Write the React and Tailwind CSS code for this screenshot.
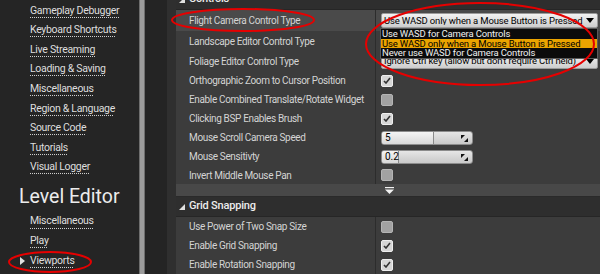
import React from 'react';

const sideTop = [
  'Gameplay Debugger',
  'Keyboard Shortcuts',
  'Live Streaming',
  'Loading & Saving',
  'Miscellaneous',
  'Region & Language',
  'Source Code',
  'Tutorials',
  'Visual Logger',
];

function SideLink({ label, arrow }) {
  return (
    <div className="h-[19.6px] flex items-center pl-[30px] relative">
      {arrow && (
        <span className="absolute left-[20px] top-[6px] w-0 h-0 border-y-[4px] border-y-transparent border-l-[5px] border-l-[#e0e0e0]" />
      )}
      <span className="text-[10.5px] tracking-[-0.3px] text-[#dedede] leading-none underline decoration-dotted decoration-[#cfcfcf] underline-offset-[3px]">
        {label}
      </span>
    </div>
  );
}

function Check({ on }) {
  return (
    <div
      className={`w-[12px] h-[12px] rounded-[2px] border flex items-center justify-center ${
        on ? 'bg-[#d6d6d6] border-[#eeeeee]' : 'bg-[#a2a2a2] border-[#b4b4b4]'
      }`}
    >
      {on && (
        <svg width="8" height="7" viewBox="0 0 8 7">
          <path d="M1 4 L3 6 L7 1" stroke="#333" strokeWidth="1.6" fill="none" />
        </svg>
      )}
    </div>
  );
}

function Combo({ text }) {
  return (
    <div className="w-[217px] h-[15px] rounded-[2px] bg-gradient-to-b from-[#f2f2f2] to-[#cdcdcd] border border-[#9a9a9a] flex items-center pl-[2px] pr-[3px] overflow-hidden">
      <span className="flex-1 text-[9.5px] tracking-[-0.15px] text-black leading-none whitespace-nowrap overflow-hidden">{text}</span>
      <span className="w-0 h-0 border-x-[4px] border-x-transparent border-t-[5px] border-t-black ml-[2px]" />
    </div>
  );
}

function Spinner() {
  return (
    <svg width="7" height="7" viewBox="0 0 7 7">
      <path d="M0 0 L4 0 L0 4 Z" fill="#111" />
      <path d="M7 7 L3 7 L7 3 Z" fill="#111" />
    </svg>
  );
}

function NumField({ value, fill }) {
  return (
    <div className="w-[92px] h-[14px] rounded-[3px] border border-[#8c8c8c] bg-gradient-to-b from-[#e6e6e6] to-[#c9c9c9] flex items-center relative overflow-hidden">
      <div className="h-full border-r border-[#8a8a8a] bg-gradient-to-b from-[#f4f4f4] to-[#d8d8d8]" style={{ width: fill }} />
      <span className="absolute left-[3px] top-0 h-full flex items-center text-[10px] text-black leading-none">{value}</span>
      <span className="absolute right-[4px] top-[3px]"><Spinner /></span>
    </div>
  );
}

function Row({ label, h = 19, hl, children }) {
  return (
    <div className={`flex ${hl ? 'bg-[#4a4a4a]' : ''}`} style={{ height: h }}>
      <div className="w-[199px] pl-[13px] flex items-center text-[10px] tracking-[-0.35px] text-[#d4d4d4] whitespace-nowrap overflow-hidden">{label}</div>
      <div className="w-px bg-[#2c2c2c]" />
      <div className="flex-1 flex items-center pl-[5px]">{children}</div>
    </div>
  );
}

function Header({ label }) {
  return (
    <div className="h-[20px] bg-[#2e2e2e] flex items-center pl-[3px] gap-[4px] border-b border-[#262626]">
      <svg width="6" height="6" viewBox="0 0 6 6"><path d="M6 0 L6 6 L0 6 Z" fill="#e0e0e0" /></svg>
      <span className="text-[11px] tracking-[-0.2px] font-medium text-[#ececec]">{label}</span>
    </div>
  );
}

export default function App() {
  return (
    <div className="w-[600px] h-[274px] overflow-hidden flex bg-[#1e1e1e] relative" style={{ fontFamily: 'Roboto, "Noto Sans", sans-serif' }}>
      {/* sidebar */}
      <div className="w-[139px] bg-[#252525] pt-[1px] flex flex-col">
        {sideTop.map((s) => (
          <SideLink key={s} label={s} />
        ))}
        <div className="h-[34.6px] flex items-center pl-[19px] pt-[4px]">
          <span className="text-[19.5px] text-[#ececec] leading-none">Level Editor</span>
        </div>
        <SideLink label="Miscellaneous" />
        <SideLink label="Play" />
        <SideLink label="Viewports" arrow />
      </div>
      <div className="w-[6px] bg-[#9c9c9c] border-x border-[#6e6e6e]" />
      <div className="w-[22px] bg-[#242424]" />
      <div className="w-[9px] bg-[#2f2f2f]" />

      {/* details panel */}
      <div className="flex-1 bg-[#3c3c3c] flex flex-col">
        <div className="-mt-[10px]">
          <Header label="Controls" />
        </div>
        <Row label="Flight Camera Control Type" h={21} hl>
          <Combo text="Use WASD only when a Mouse Button is Pressed" />
        </Row>
        <Row label="Landscape Editor Control Type" h={20}>
          <Combo text="Use WASD only when a Mouse Button is Pressed" />
        </Row>
        <Row label="Foliage Editor Control Type" h={20}>
          <Combo text="Ignore Ctrl key (allow but don't require Ctrl held)" />
        </Row>
        <Row label="Orthographic Zoom to Cursor Position"><Check on /></Row>
        <Row label="Enable Combined Translate/Rotate Widget"><Check /></Row>
        <Row label="Clicking BSP Enables Brush"><Check on /></Row>
        <Row label="Mouse Scroll Camera Speed"><NumField value="5" fill={52} /></Row>
        <Row label="Mouse Sensitivty"><NumField value="0.2" fill={17} /></Row>
        <Row label="Invert Middle Mouse Pan" h={18}><Check /></Row>
        <div className="h-[13px] bg-[#484848] border-b border-[#2a2a2a] flex justify-center items-center pl-[2px]">
          <svg width="9" height="7" viewBox="0 0 9 7">
            <rect x="0" y="0" width="9" height="1.2" fill="#f2f2f2" />
            <path d="M0 2.5 L9 2.5 L4.5 7 Z" fill="#f2f2f2" />
          </svg>
        </div>
        <Header label="Grid Snapping" />
        <Row label="Use Power of Two Snap Size"><Check /></Row>
        <Row label="Enable Grid Snapping"><Check on /></Row>
        <Row label="Enable Rotation Snapping"><Check on /></Row>
      </div>

      {/* open dropdown menu */}
      <div className="absolute left-[380px] top-[28px] w-[218px] bg-[#0b0b0b] border border-[#5a5a5a] text-[9.5px] tracking-[-0.15px] leading-[9.6px]">
        <div className="px-[1px] text-[#f0f0f0] whitespace-nowrap">Use WASD for Camera Controls</div>
        <div className="px-[1px] bg-[#eba400] text-black whitespace-nowrap">Use WASD only when a Mouse Button is Pressed</div>
        <div className="px-[1px] text-[#f0f0f0] whitespace-nowrap">Never use WASD for Camera Controls</div>
      </div>

      {/* annotation ellipses */}
      <svg className="absolute left-0 top-0 pointer-events-none" width="600" height="274">
        <ellipse cx="243" cy="20" rx="71" ry="11" fill="none" stroke="#e60000" strokeWidth="2" />
        <ellipse cx="480" cy="44" rx="114" ry="41" fill="none" stroke="#e60000" strokeWidth="2" />
        <ellipse cx="50" cy="262" rx="41" ry="10" fill="none" stroke="#e60000" strokeWidth="2" />
      </svg>
    </div>
  );
}
